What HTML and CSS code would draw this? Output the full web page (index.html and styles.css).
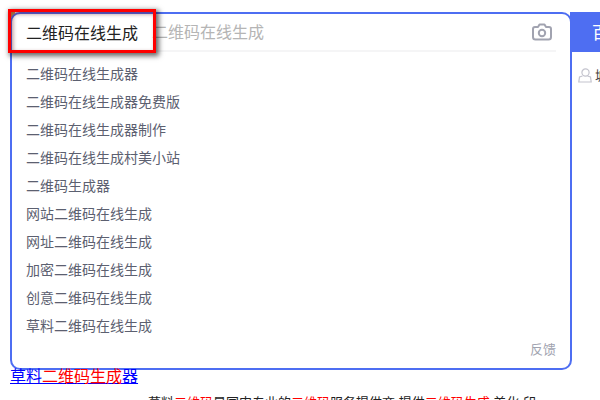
FILE: index.html
```html
<!DOCTYPE html>
<html lang="zh-CN">
<head>
<meta charset="utf-8">
<title>二维码在线生成</title>
<link rel="stylesheet" href="styles.css">
</head>
<body>
<div class="top">
  <div class="panel">
    <div class="input-row">
      <span class="query">二维码在线生成</span>
      <span class="query-ghost">二维码在线生成</span>
      <svg class="camera" width="20" height="18" viewBox="0 0 20 18" fill="none" stroke="#a1a3b0" stroke-width="2" stroke-linejoin="round">
        <path d="M3 4h3l1.500-2.500h5L14 4h3a2 2 0 0 1 2 2v8a2.500 2.500 0 0 1-2.500 2.500h-13A2.500 2.500 0 0 1 1 14V6a2 2 0 0 1 2-2z"/>
        <circle cx="10" cy="10" r="3.200"/>
      </svg>
    </div>
    <ul class="list">
      <li>二维码在线生成器</li>
      <li>二维码在线生成器免费版</li>
      <li>二维码在线生成器制作</li>
      <li>二维码在线生成村美小站</li>
      <li>二维码生成器</li>
      <li>网站二维码在线生成</li>
      <li>网址二维码在线生成</li>
      <li>加密二维码在线生成</li>
      <li>创意二维码在线生成</li>
      <li>草料二维码在线生成</li>
    </ul>
    <div class="feedback">反馈</div>
    <div class="highlight"></div>
  </div>
  <div class="side">
    <div class="baidu-btn">百度一下</div>
    <div class="tip">
      <svg class="tip-icon" width="14" height="15" viewBox="0 0 14 15" fill="none" stroke="#c4c4ce" stroke-width="1.200">
        <circle cx="7.500" cy="4.500" r="3.600"/>
        <path d="M4.500 8L1.500 9 .8 14h12.400l-.7-5-3-1"/>
      </svg>
      <span class="tip-text">城市</span>
    </div>
  </div>
</div>
<a class="result-title" href="#">草料<em>二维码生成</em>器</a>
<p class="result-desc">草料<em>二维码</em>是国内专业的<em>二维码</em>服务提供商,提供<em>二维码生成</em>,美化,印</p>
</body>
</html>
```
FILE: styles.css
```css
html, body { margin: 0; padding: 0; }
body {
  width: 600px;
  height: 400px;
  overflow: hidden;
  background: #fff;
  font-family: "Noto Sans CJK SC", "Noto Sans", sans-serif;
  color: #222;
}
em { font-style: normal; color: #f00; }

.top { display: flex; padding: 12px 0 0 10px; }

.panel {
  position: relative;
  box-sizing: border-box;
  width: 562px;
  height: 358px;
  border: 2px solid #4e6ef2;
  border-radius: 10px;
  padding: 0 14px;
  background: #fff;
  flex: none;
}
.panel::before {
  content: "";
  position: absolute;
  left: -2px;
  top: -2px;
  width: 5px;
  height: 5px;
  background: #c8a060;
  z-index: -1;
}
.input-row {
  display: flex;
  align-items: center;
  height: 36px;
  border-bottom: 2px solid #f5f5f6;
}
.query { font-size: 16px; color: #222; line-height: 36px; }
.query-ghost { margin-left: 14px; margin-bottom: 2px; font-size: 16px; color: #b5b5b5; line-height: 36px; }
.camera { margin-left: auto; margin-right: 4px; }

.list { list-style: none; margin: 7px 0 0; padding: 0; }
.list li {
  height: 28px;
  line-height: 28px;
  font-size: 14px;
  color: #5c6070;
}
.feedback {
  position: absolute;
  right: 14px;
  bottom: 10px;
  font-size: 13px;
  line-height: 18px;
  color: #a1a3b0;
}
.highlight {
  position: absolute;
  left: -4px;
  top: -5px;
  box-sizing: border-box;
  width: 148px;
  height: 44px;
  border: 3px solid #f00;
  box-shadow: 2px 2px 5px 1px rgba(0,0,0,.6), inset 2px 2px 4px rgba(90,0,0,.45);
}

.side { flex: 1; min-width: 0; margin-left: -2px; position: relative; overflow: hidden; }
.baidu-btn {
  height: 40px;
  background: #4e6ef2;
  color: #fff;
  font-size: 17px;
  line-height: 40px;
  padding-left: 22px;
  white-space: nowrap;
}
.tip { display: flex; align-items: center; gap: 3px; margin-top: 15px; padding-left: 8px; font-size: 13px; line-height: 16px; color: #444; white-space: nowrap; }
.tip-icon { flex: none; }

.result-title { display: block; margin: -2px 0 0 10px; font-size: 16px; line-height: 14px; color: #00f; text-decoration: underline; position: relative; }
.result-desc { margin: 11px 0 0 148px; font-size: 13px; line-height: 18px; white-space: nowrap; color: #222; }
```
